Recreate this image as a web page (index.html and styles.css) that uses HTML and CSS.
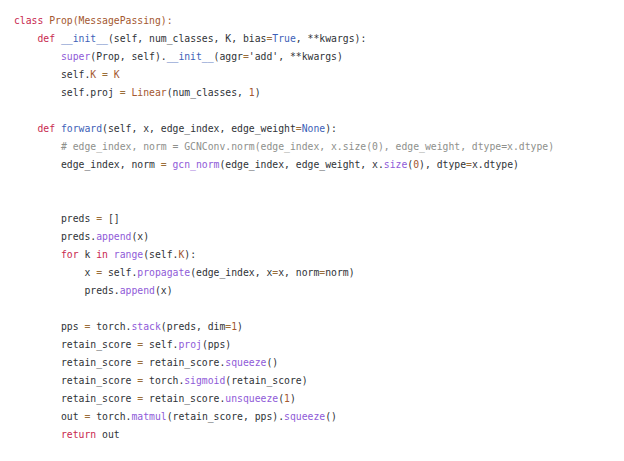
FILE: index.html
```html
<!DOCTYPE html>
<html>
<head>
<meta charset="utf-8">
<link rel="stylesheet" href="styles.css">
</head>
<body>
<pre class="code"><span class="kw">class</span> <span class="cls">Prop(MessagePassing):</span>
    <span class="kw">def</span> <span class="fn">__init__</span>(self, num_classes, K, bias<span class="op">=</span><span class="bl">True</span>, **kwargs):
        <span class="bi">super</span>(Prop, self).<span class="fn">__init__</span>(aggr<span class="op">=</span><span class="st">'add'</span>, **kwargs)
        self.<span class="cls">K</span> <span class="op">=</span> <span class="cls">K</span>
        self.proj <span class="op">=</span> <span class="cls">Linear</span>(num_classes, <span class="nm">1</span>)

    <span class="kw">def</span> <span class="fn">forward</span>(self, x, edge_index, edge_weight<span class="op">=</span><span class="bl">None</span>):
        <span class="cm"># edge_index, norm = GCNConv.norm(edge_index, x.size(0), edge_weight, dtype=x.dtype)</span>
        edge_index, norm <span class="op">=</span> <span class="bi">gcn_norm</span>(edge_index, edge_weight, x.<span class="bi">size</span>(<span class="nm">0</span>), dtype<span class="op">=</span>x.dtype)


        preds <span class="op">=</span> []
        preds.<span class="bi">append</span>(x)
        <span class="kw">for</span> k <span class="kw">in</span> <span class="bi">range</span>(self.<span class="cls">K</span>):
            x <span class="op">=</span> self.<span class="bi">propagate</span>(edge_index, x<span class="op">=</span>x, norm<span class="op">=</span>norm)
            preds.<span class="bi">append</span>(x)

        pps <span class="op">=</span> torch.<span class="bi">stack</span>(preds, dim<span class="op">=</span><span class="nm">1</span>)
        retain_score <span class="op">=</span> self.<span class="bi">proj</span>(pps)
        retain_score <span class="op">=</span> retain_score.<span class="bi">squeeze</span>()
        retain_score <span class="op">=</span> torch.<span class="bi">sigmoid</span>(retain_score)
        retain_score <span class="op">=</span> retain_score.<span class="bi">unsqueeze</span>(<span class="nm">1</span>)
        out <span class="op">=</span> torch.<span class="bi">matmul</span>(retain_score, pps).<span class="bi">squeeze</span>()
        <span class="kw">return</span> out</pre>
</body>
</html>
```
FILE: styles.css
```css
html, body {
  margin: 0;
  padding: 0;
  background: #ffffff;
}
.code {
  margin: 0;
  padding: 12px 0 0 14px;
  font-family: "DejaVu Sans Mono", "Liberation Mono", monospace;
  font-size: 9.75px;
  line-height: 18px;
  color: #2f3337;
  white-space: pre;
}
.kw { color: #c8284e; }
.cls { color: #a4582f; }
.fn { color: #3e5fb8; }
.bi { color: #8f5bd8; }
.bl { color: #3e5fb8; }
.op { color: #9a6e3a; }
.st { color: #2f3337; }
.nm { color: #a4582f; }
.cm { color: #8e908c; }
```
